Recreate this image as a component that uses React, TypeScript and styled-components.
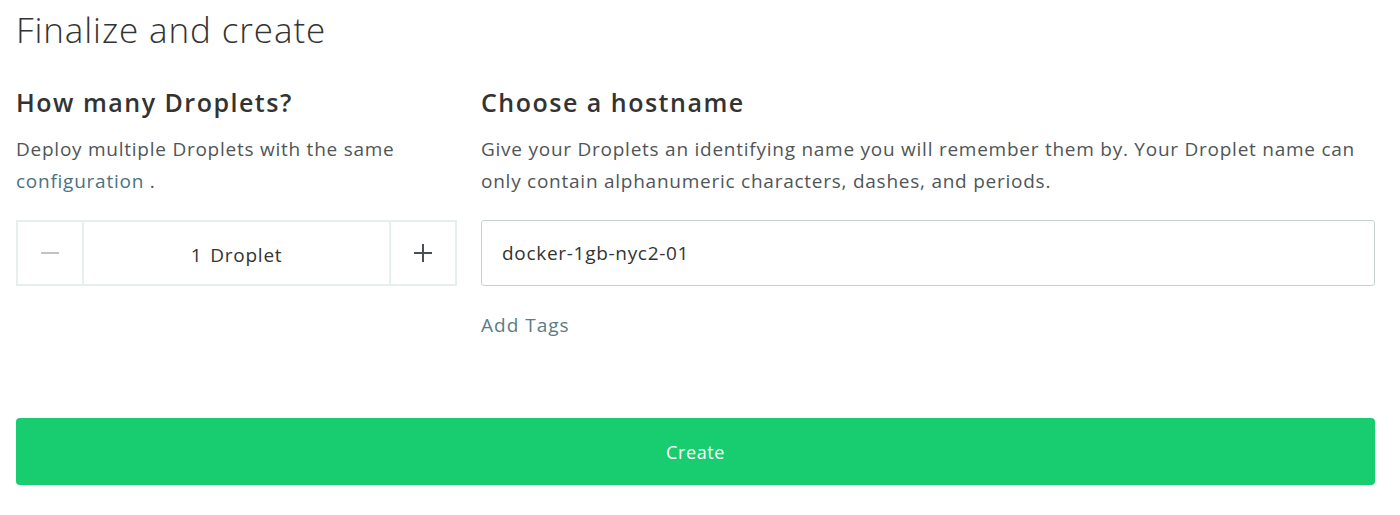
import React from "react";
import styled, { createGlobalStyle } from "styled-components";

const Global = createGlobalStyle`
  html, body { margin: 0; padding: 0; background: #fff; }
  body { font-family: "Open Sans", "Liberation Sans", sans-serif; color: #333; }
  * { box-sizing: border-box; }
`;

const Page = styled.div`
  padding: 10px 25px 0 16px;
`;

const Title = styled.h1`
  margin: 0;
  font-size: 35px;
  line-height: 40px;
  font-weight: 300;
  letter-spacing: 0.9px;
  color: #333;
`;

const Columns = styled.div`
  display: grid;
  grid-template-columns: 441px 1fr;
  column-gap: 24px;
  margin-top: 36px;
`;

const Column = styled.section`
  display: flex;
  flex-direction: column;
`;

const Heading = styled.h2`
  margin: 0;
  font-size: 25px;
  line-height: 32px;
  font-weight: 600;
  letter-spacing: 1.5px;
  color: #333;
`;

const Text = styled.p`
  margin: 15px 0 0;
  font-size: 19px;
  line-height: 32px;
  letter-spacing: 0.75px;
  color: #4f5558;
`;

const Link = styled.a`
  color: #4a7280;
  text-decoration: none;
`;

const Stepper = styled.div`
  margin-top: 23px;
  display: flex;
  height: 66px;
  border: 2px solid #e6efee;
`;

const StepButton = styled.button<{ $side: "left" | "right"; $muted?: boolean }>`
  width: 66px;
  flex: none;
  border: none;
  background: #fff;
  padding: 0;
  display: flex;
  align-items: center;
  justify-content: center;
  color: ${(p) => (p.$muted ? "#c0c4c6" : "#4a5052")};
  ${(p) => (p.$side === "left" ? "border-right: 2px solid #e6efee;" : "border-left: 2px solid #e6efee;")}
`;

const Count = styled.div`
  flex: 1;
  display: flex;
  align-items: center;
  justify-content: center;
  padding-top: 3px;
  font-size: 19px;
  letter-spacing: 0.75px;
  color: #333;
  gap: 8px;
`;

const Input = styled.input`
  margin-top: 23px;
  height: 66px;
  border: 1px solid #c9d0d2;
  border-radius: 3px;
  padding: 0 20px;
  font-family: inherit;
  font-size: 19px;
  letter-spacing: 0.7px;
  color: #333;
  outline: none;
`;

const AddTags = styled.a`
  align-self: flex-start;
  margin-top: 23px;
  font-size: 19px;
  line-height: 32px;
  letter-spacing: 1px;
  color: #5b7c84;
  text-decoration: none;
`;

const CreateButton = styled.button`
  display: block;
  width: 100%;
  margin-top: 77px;
  height: 67px;
  border: none;
  border-radius: 4px;
  background: #18cc70;
  color: #fff;
  font-family: inherit;
  font-size: 18px;
  font-weight: 400;
  letter-spacing: 0.6px;
`;

const Minus = () => (
  <svg width="20" height="20" viewBox="0 0 20 20">
    <path d="M1 10h18" stroke="currentColor" strokeWidth="2" />
  </svg>
);

const Plus = () => (
  <svg width="20" height="20" viewBox="0 0 20 20">
    <path d="M1 10h18M10 1v18" stroke="currentColor" strokeWidth="2" />
  </svg>
);

export default function App() {
  return (
    <>
      <Global />
      <Page>
        <Title>Finalize and create</Title>
        <Columns>
          <Column>
            <Heading>How many Droplets?</Heading>
            <Text>
              Deploy multiple Droplets with the same <Link href="#">configuration</Link> .
            </Text>
            <Stepper>
              <StepButton $side="left" $muted aria-label="decrease"><Minus /></StepButton>
              <Count><span>1</span><span>Droplet</span></Count>
              <StepButton $side="right" aria-label="increase"><Plus /></StepButton>
            </Stepper>
          </Column>
          <Column>
            <Heading>Choose a hostname</Heading>
            <Text>
              Give your Droplets an identifying name you will remember them by. Your Droplet name can only contain alphanumeric characters, dashes, and periods.
            </Text>
            <Input defaultValue="docker-1gb-nyc2-01" />
            <AddTags href="#">Add Tags</AddTags>
          </Column>
        </Columns>
        <CreateButton>Create</CreateButton>
      </Page>
    </>
  );
}
